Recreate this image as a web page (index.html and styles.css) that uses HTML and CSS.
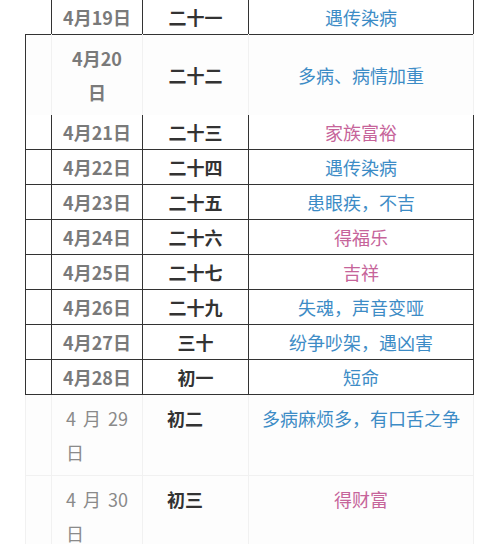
FILE: index.html
```html
<!DOCTYPE html>
<html lang="zh-CN">
<head>
<meta charset="utf-8">
<title>日期吉凶表</title>
<link rel="stylesheet" href="styles.css">
</head>
<body>
<div class="table">
  <div class="row top">
    <div class="c c1"></div>
    <div class="c c2 date">4月19日</div>
    <div class="c c3 lunar">二十一</div>
    <div class="c c4 blue">遇传染病</div>
  </div>
  <div class="row soft">
    <div class="c c1"></div>
    <div class="c c2 date wrap">4月20日</div>
    <div class="c c3 lunar">二十二</div>
    <div class="c c4 blue">多病、病情加重</div>
  </div>
  <div class="row line">
    <div class="c c1"></div>
    <div class="c c2 date">4月21日</div>
    <div class="c c3 lunar">二十三</div>
    <div class="c c4 pink">家族富裕</div>
  </div>
  <div class="row line">
    <div class="c c1"></div>
    <div class="c c2 date">4月22日</div>
    <div class="c c3 lunar">二十四</div>
    <div class="c c4 blue">遇传染病</div>
  </div>
  <div class="row line">
    <div class="c c1"></div>
    <div class="c c2 date">4月23日</div>
    <div class="c c3 lunar">二十五</div>
    <div class="c c4 blue">患眼疾，不吉</div>
  </div>
  <div class="row line">
    <div class="c c1"></div>
    <div class="c c2 date">4月24日</div>
    <div class="c c3 lunar">二十六</div>
    <div class="c c4 pink">得福乐</div>
  </div>
  <div class="row line">
    <div class="c c1"></div>
    <div class="c c2 date">4月25日</div>
    <div class="c c3 lunar">二十七</div>
    <div class="c c4 pink">吉祥</div>
  </div>
  <div class="row line">
    <div class="c c1"></div>
    <div class="c c2 date">4月26日</div>
    <div class="c c3 lunar">二十九</div>
    <div class="c c4 blue">失魂，声音变哑</div>
  </div>
  <div class="row line">
    <div class="c c1"></div>
    <div class="c c2 date">4月27日</div>
    <div class="c c3 lunar">三十</div>
    <div class="c c4 blue">纷争吵架，遇凶害</div>
  </div>
  <div class="row line">
    <div class="c c1"></div>
    <div class="c c2 date">4月28日</div>
    <div class="c c3 lunar">初一</div>
    <div class="c c4 blue">短命</div>
  </div>
  <div class="row plain">
    <div class="c c1"></div>
    <div class="c c2 pdate">4月29日</div>
    <div class="c c3 plunar">初二</div>
    <div class="c c4 blue">多病麻烦多，有口舌之争</div>
  </div>
  <div class="row plain">
    <div class="c c1"></div>
    <div class="c c2 pdate">4月30日</div>
    <div class="c c3 plunar">初三</div>
    <div class="c c4 pink">得财富</div>
  </div>
</div>
</body>
</html>
```

FILE: styles.css
```css
html, body {
  margin: 0;
  padding: 0;
  background: #ffffff;
}

body {
  font-family: "Noto Sans CJK SC", "Noto Sans", sans-serif;
  font-size: 18px;
  line-height: 34px;
}

.table {
  margin-left: 25px;
  width: 449px;
}

.row {
  display: grid;
  grid-template-columns: 27px 91px 106px 225px;
}

.c {
  box-sizing: border-box;
  display: flex;
  align-items: center;
  justify-content: center;
  text-align: center;
}

/* bordered rows */
.top, .line {
  height: 35px;
}
.top {
  height: 34px;
}
.top .c, .line .c {
  border-right: 1px solid #333;
  border-bottom: 1px solid #333;
}
.line .c1 {
  border-left: 1px solid #333;
}

/* soft (unbordered) merged-style row */
.soft {
  height: 81px;
  background: #fdfdfd;
}
.soft .c {
  border-right: 1px solid #f1f1f1;
}
.soft .c1 {
  border-left: 1px solid #333;
}
.soft .wrap {
  padding: 0 14px;
}

/* plain bottom rows */
.plain {
  height: 81px;
  background: #fdfdfd;
}
.plain .c {
  align-items: flex-start;
  padding-top: 6px;
  border-right: 1px solid #f1f1f1;
  border-bottom: 1px solid #f1f1f1;
}
.plain .c1 {
  border-left: 1px solid #f1f1f1;
}

.date {
  color: #7a7a7a;
  font-weight: bold;
}

.lunar {
  color: #333333;
  font-weight: bold;
}

.pdate {
  display: block;
  color: #8a8a8a;
  text-align: justify;
  padding-left: 14px;
  padding-right: 14px;
}

.plunar {
  justify-content: flex-start;
  padding-left: 24px;
  color: #333333;
  font-weight: bold;
}

.blue {
  color: #3d8cc6;
}

.pink {
  color: #c6649a;
}
```
